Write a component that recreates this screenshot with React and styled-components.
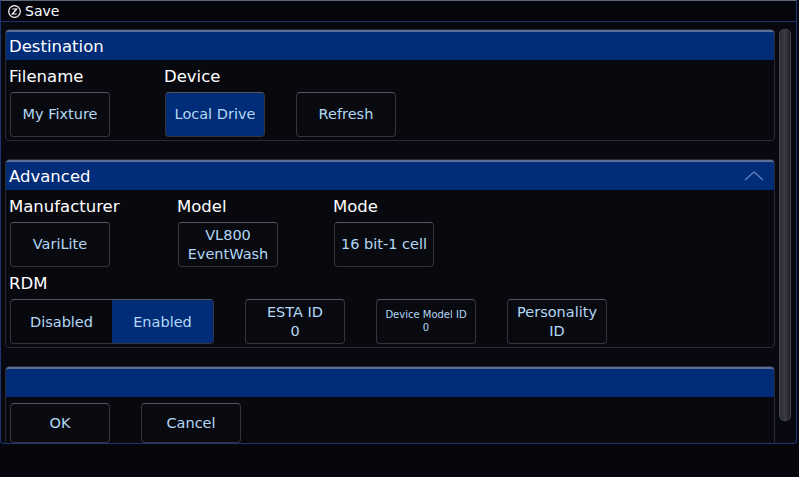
import React from "react";
import styled, { createGlobalStyle } from "styled-components";

const Global = createGlobalStyle`
  html, body { margin: 0; background: #06070d; }
  body { font-family: "DejaVu Sans", "Liberation Sans", sans-serif; width: 799px; height: 477px; overflow: hidden; }
`;

const Window = styled.div`
  width: 797px;
  height: 444px;
  border: 1px solid #1c3670;
  border-top-color: #5a6478;
  border-radius: 0 0 4px 4px;
  box-sizing: border-box;
  background: #080910;
  display: flex;
  flex-direction: column;
  overflow: hidden;
`;

const TitleBar = styled.div`
  height: 20px;
  display: flex;
  align-items: center;
  gap: 4px;
  padding-left: 7px;
  color: #fff;
  font-size: 14px;
  border-bottom: 1px solid #1c3670;
  background: #05060b;
`;

const Body = styled.div`
  flex: 1;
  display: flex;
  gap: 4px;
  padding: 7px 4px 0 4px;
  min-height: 0;
`;

const Content = styled.div`
  flex: 1;
  display: flex;
  flex-direction: column;
  gap: 18px;
  min-width: 0;
`;

const Scroll = styled.div`
  width: 10px;
  height: 390px;
  margin-right: 1px;
  border-radius: 5px;
  background: linear-gradient(90deg, #2a2b33, #3a3b44 50%, #1e1f26);
  border: 1px solid #44454e;
`;

const Panel = styled.div`
  border: 1px solid #2a2b33;
  border-radius: 4px;
  background: #08090f;
  padding-bottom: 3px;
  flex-shrink: 0;
`;

const Header = styled.div`
  height: 28px;
  background: #002c78;
  border-top: 2px solid #5b6e98;
  border-radius: 3px 3px 0 0;
  color: #fff;
  font-size: 16.5px;
  display: flex;
  align-items: center;
  justify-content: space-between;
  padding: 0 10px 0 3px;
`;

const Cols = styled.div`
  display: flex;
  padding-left: 3px;
`;

const Col = styled.div`
  width: ${p => p.w}px;
  display: flex;
  flex-direction: column;
`;

const Label = styled.div`
  color: #fff;
  font-size: 16.5px;
  height: 32px;
  display: flex;
  align-items: center;
`;

const Btn = styled.div`
  width: 100px;
  height: ${p => p.h || 45}px;
  box-sizing: border-box;
  border: 1px solid #33343c;
  border-top-color: #555660;
  border-radius: 4px;
  background: ${p => (p.active ? "#002c78" : "#090a10")};
  color: #b3d8f5;
  font-size: ${p => p.small || 14.5}px;
  display: flex;
  align-items: center;
  justify-content: center;
  text-align: center;
  line-height: 1.25;
  margin-left: 1px;
`;

const Row = styled.div`
  display: flex;
  align-items: flex-end;
  gap: 30px;
  padding-left: 3px;
`;

const Seg = styled.div`
  display: flex;
  width: 204px;
  height: 45px;
  box-sizing: border-box;
  border: 1px solid #33343c;
  border-top-color: #555660;
  border-radius: 4px;
  overflow: hidden;
  margin-left: 1px;
`;

const SegItem = styled.div`
  flex: 1;
  display: flex;
  align-items: center;
  justify-content: center;
  color: #b3d8f5;
  font-size: 14.5px;
  background: ${p => (p.active ? "#002c78" : "transparent")};
`;

export default function App() {
  return (
    <>
      <Global />
      <Window>
        <TitleBar>
          <svg width="13" height="13" viewBox="0 0 13 13">
            <circle cx="6.5" cy="6.5" r="5.8" fill="none" stroke="#fff" strokeWidth="1.2" />
            <path d="M4.3 4h4.4L4.3 9h4.4" fill="none" stroke="#fff" strokeWidth="1.2" />
          </svg>
          Save
        </TitleBar>
        <Body>
          <Content>
            <Panel>
              <Header>Destination</Header>
              <Row style={{ gap: 0 }}>
                <Col w={155}><Label>Filename</Label><Btn>My Fixture</Btn></Col>
                <Col w={131}><Label>Device</Label><Btn active>Local Drive</Btn></Col>
                <Col w={110}><Btn>Refresh</Btn></Col>
              </Row>
            </Panel>
            <Panel>
              <Header>
                Advanced
                <svg width="20" height="10" viewBox="0 0 20 10">
                  <path d="M1 9L10 1l9 8" fill="none" stroke="#5d7bb8" strokeWidth="1.5" />
                </svg>
              </Header>
              <Cols>
                <Col w={168}><Label>Manufacturer</Label><Btn>VariLite</Btn></Col>
                <Col w={156}><Label>Model</Label><Btn>VL800<br />EventWash</Btn></Col>
                <Col w={110}><Label>Mode</Label><Btn>16 bit-1 cell</Btn></Col>
              </Cols>
              <Row>
                <Col w={205}>
                  <Label>RDM</Label>
                  <Seg><SegItem>Disabled</SegItem><SegItem active>Enabled</SegItem></Seg>
                </Col>
                <Btn>ESTA ID<br />0</Btn>
                <Btn small={10}>Device Model ID<br />0</Btn>
                <Btn>Personality<br />ID</Btn>
              </Row>
            </Panel>
            <Panel>
              <Header />
              <Row style={{ paddingTop: 6 }}>
                <Btn h={40}>OK</Btn>
                <Btn h={40}>Cancel</Btn>
              </Row>
            </Panel>
          </Content>
          <Scroll />
        </Body>
      </Window>
    </>
  );
}
